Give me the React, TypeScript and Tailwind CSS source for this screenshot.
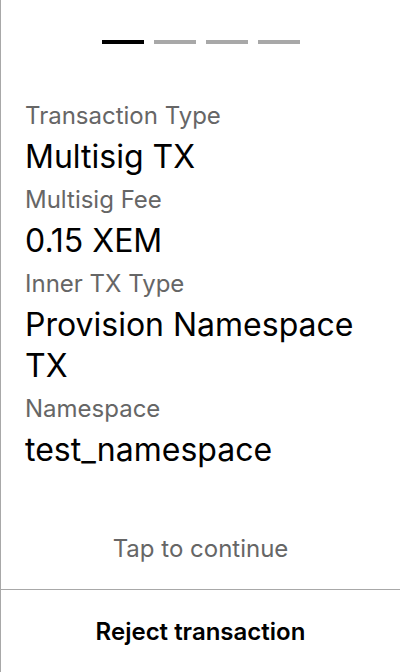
const fields = [
  { label: "Transaction Type", value: "Multisig TX" },
  { label: "Multisig Fee", value: "0.15 XEM" },
  { label: "Inner TX Type", value: "Provision Namespace TX" },
  { label: "Namespace", value: "test_namespace" },
];

export default function App() {
  return (
    <div
      className="flex h-[672px] w-[400px] flex-col border-l border-[#a8a8a8] bg-white"
      style={{ fontFamily: "Inter, 'Noto Sans', sans-serif" }}
    >
      <div className="flex justify-center gap-[10px] pt-10 pl-px">
        <div className="h-1 w-[42px] bg-black" />
        <div className="h-1 w-[42px] bg-[#a8a8a8]" />
        <div className="h-1 w-[42px] bg-[#a8a8a8]" />
        <div className="h-1 w-[42px] bg-[#a8a8a8]" />
      </div>

      <div className="mt-[58px] flex flex-col gap-[9px] pl-6 pr-6">
        {fields.map((f) => (
          <div key={f.label} className="flex flex-col">
            <div className="text-[24px] leading-[28px] text-[#666666]">{f.label}</div>
            <div className="mt-[6px] text-[32px] leading-[41px] text-black">{f.value}</div>
          </div>
        ))}
      </div>

      <div className="flex-1" />

      <div className="mb-[26px] text-center text-[24px] leading-[28px] text-[#666666]">
        Tap to continue
      </div>

      <button className="flex h-[83px] items-center justify-center border-t border-[#a8a8a8] pt-[1px] text-[24px] font-semibold text-black">
        Reject transaction
      </button>
    </div>
  );
}
